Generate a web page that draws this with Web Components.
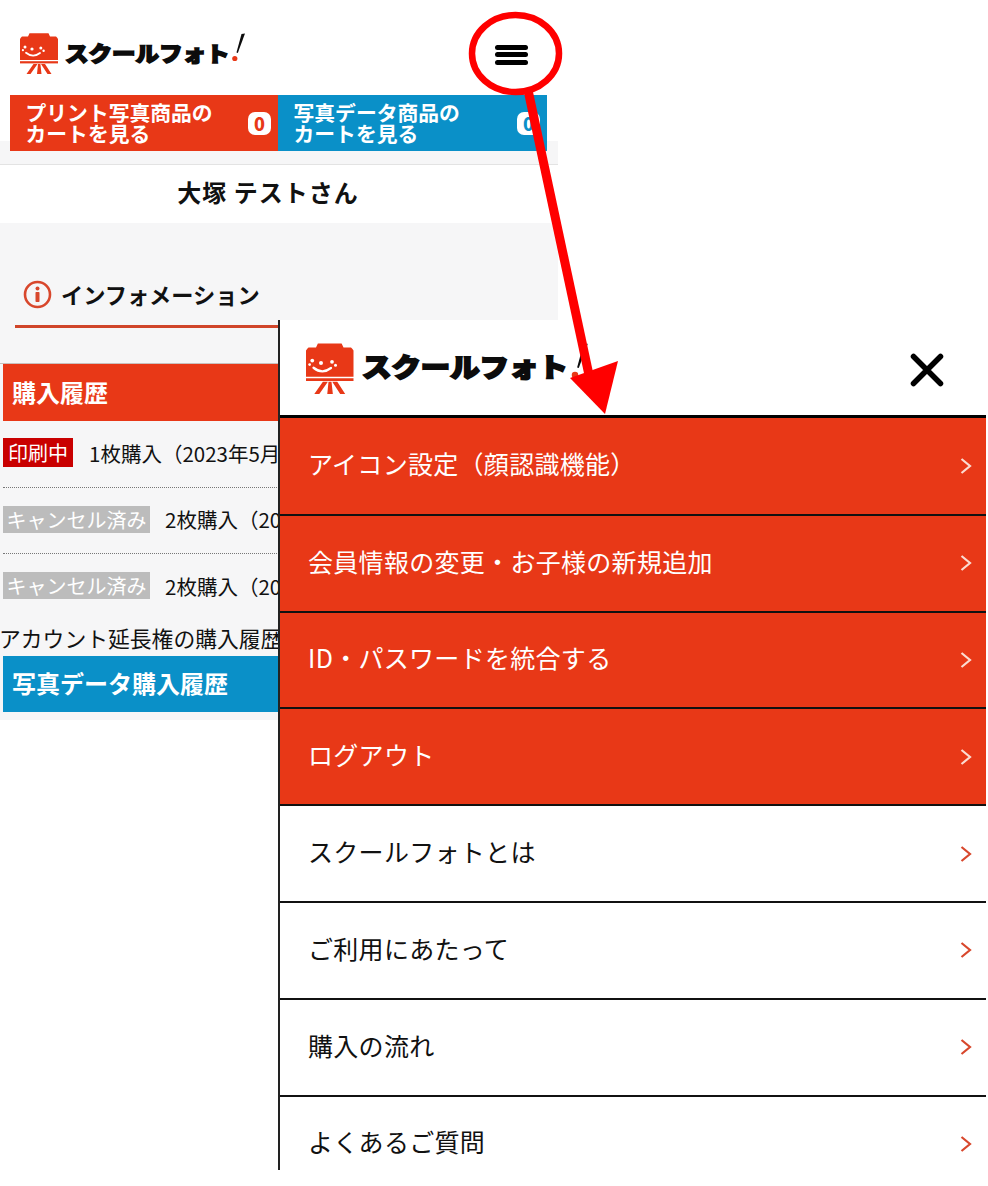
<!DOCTYPE html>
<html lang="ja"><head><meta charset="utf-8"><title>スクールフォト</title>
<style>
html,body{margin:0;padding:0;background:#fff}
body{font-family:"Noto Sans CJK JP","Noto Sans",sans-serif;color:#000}
</style></head><body>
<x-app>
  <x-screen>
    <x-top></x-top>
    <x-cart-bar>
      <x-cart color="#e83817" count="0">プリント写真商品の<br>カートを見る</x-cart>
      <x-cart color="#0a90c8" count="0">写真データ商品の<br>カートを見る</x-cart>
    </x-cart-bar>
    <x-user>大塚 テストさん</x-user>
    <x-info>インフォメーション</x-info>
    <x-bar color="#e83817" h="57">購入履歴</x-bar>
    <x-order state="printing" label="印刷中" h="67">1枚購入（2023年5月</x-order>
    <x-order state="cancel" label="キャンセル済み" h="66">2枚購入（2023年5月</x-order>
    <x-order state="cancel" label="キャンセル済み" h="66" noline="">2枚購入（2023年5月</x-order>
    <x-plain>アカウント延長権の購入履歴</x-plain>
    <x-bar color="#0a90c8" h="56">写真データ購入履歴</x-bar>
  </x-screen>
  <x-menu>
    <x-menu-item tone="red" first="">アイコン設定（顔認識機能）</x-menu-item>
    <x-menu-item tone="red">会員情報の変更・お子様の新規追加</x-menu-item>
    <x-menu-item tone="red">ID・パスワードを統合する</x-menu-item>
    <x-menu-item tone="red">ログアウト</x-menu-item>
    <x-menu-item>スクールフォトとは</x-menu-item>
    <x-menu-item>ご利用にあたって</x-menu-item>
    <x-menu-item>購入の流れ</x-menu-item>
    <x-menu-item>よくあるご質問</x-menu-item>
  </x-menu>
  <x-annotation></x-annotation>
</x-app>
<script>
function def(name, css, html, init){
  customElements.define(name, class extends HTMLElement{
    connectedCallback(){
      if(this.shadowRoot) return;
      const r=this.attachShadow({mode:'open'});
      r.innerHTML='<style>'+css+'</style>'+(typeof html==='function'?html(this):html);
      if(init) init(this,r);
    }
  });
}
const FONT='"Noto Sans CJK JP","Noto Sans",sans-serif';
const GREY='#f6f6f7';
def('x-app',`:host{display:block;position:relative;width:988px;height:1186px;overflow:hidden;background:#fff;font-family:${FONT}}`,'<slot></slot>');
def('x-screen',`:host{display:flex;flex-direction:column;width:558px;height:720px;background:${GREY}}`,'<slot></slot>');
def('x-logo',`:host{display:inline-flex;align-items:flex-start;--s:var(--scale,1)}
 svg.cam{display:block;width:calc(38px*var(--s));height:calc(41px*var(--s));flex:none}
 span{display:block;width:calc(165px*var(--s));margin-left:calc(7px*var(--s));margin-top:calc(5px*var(--s));font-size:calc(21px*var(--s));line-height:calc(28px*var(--s));font-weight:900;color:#0c0c0c;-webkit-text-stroke:calc(1.5px*var(--s)) #0c0c0c;white-space:nowrap;transform:scaleX(1.12);transform-origin:0 50%}
 svg.ex{display:block;flex:none;width:calc(16px*var(--s));height:calc(30px*var(--s))}`,
 `<svg class="cam" viewBox="0 0 38 41"><path fill="#e83817" d="M1 4.500 2 3.500H8L9.500 .3H28.500L30 3.500H36L37 4.500 38 6V27H0V6z"/><rect x="0" y="28.200" width="38" height="2.200" fill="#e83817"/>
 <g fill="#fff"><circle cx="5" cy="14" r="1.500"/><circle cx="2.900" cy="17.200" r="1.100"/><circle cx="12" cy="16" r="1.600"/><circle cx="20.800" cy="15" r="1.500"/><circle cx="23.600" cy="17.800" r="1.200"/></g>
 <path d="M6 19.800q7 5.600 14 .2" fill="none" stroke="#fff" stroke-width="1.800" stroke-linecap="round"/>
 <path fill="#e83817" d="M13.500 31h4L10.500 41H6.500zM18 31h2.400L21.500 41h-4.500zM21 31h4L31.500 41h-4z"/></svg>
 <span>スクールフォト</span>
 <svg class="ex" viewBox="0 0 16 30"><path d="M15 .5 7.800 20 6.500 19.500 11.500 1z" fill="#0c0c0c"/><circle cx="4.800" cy="25.500" r="2.600" fill="#e83817"/></svg>`);
def('x-top',`:host{display:block;height:95px;box-sizing:border-box;padding:33px 0 0 20px;background:#fff}`,`<x-logo></x-logo>`);
def('x-cart-bar',`:host{display:grid;grid-template-columns:268px 269px;padding:0 11px 14px 10px;background:linear-gradient(#fff 0 46px,${GREY} 46px 69px,#e3e3e3 69px 70px)}`,'<slot></slot>');
def('x-cart',`:host{display:flex;align-items:center;justify-content:space-between;height:56px;box-sizing:border-box;padding:0 7px 0 15.500px;background:var(--c);color:#fff;font-size:20.800px;line-height:21px;font-weight:700}
 .n{display:flex;align-items:center;justify-content:center;width:23px;height:23px;border-radius:7px;background:#fff;color:var(--c);font-size:18px;font-weight:900;line-height:1}
 .t{white-space:nowrap;margin-top:-1px}`,
 e=>`<div class="t"><slot></slot></div><div class="n">${e.getAttribute('count')}</div>`,
 e=>e.style.setProperty('--c',e.getAttribute('color')));
def('x-user',`:host{display:flex;align-items:center;justify-content:center;height:58px;box-sizing:border-box;padding:0 22px 6px 0;background:#fff;font-size:24px;font-weight:700;letter-spacing:1px;color:#111;white-space:nowrap}`,'<slot></slot>');
def('x-info',`:host{display:block;height:141px;box-sizing:border-box;padding:55px 0 0 15px;border-bottom:1px solid #c9c0bd}
 .h{display:flex;align-items:center;gap:9px;height:50px;box-sizing:border-box;padding:0 0 15px 8px;border-bottom:3px solid #d0452a;font-size:22.200px;font-weight:700;color:#111;white-space:nowrap}
 svg{flex:none}`,
 `<div class="h"><svg width="29" height="29" viewBox="0 0 29 29"><circle cx="14.500" cy="14.500" r="12.500" fill="none" stroke="#d8472c" stroke-width="2.600"/><circle cx="14.500" cy="8.500" r="2" fill="#d8472c"/><rect x="12.500" y="12" width="4" height="10" rx=".8" fill="#d8472c"/></svg><span><slot></slot></span></div>`);
def('x-bar',`:host{display:flex;align-items:center;margin-left:3px;box-sizing:border-box;padding:0 0 3px 9px;background:var(--c);color:#fff;font-size:24px;font-weight:700;white-space:nowrap}`,'<slot></slot>',
 e=>{e.style.setProperty('--c',e.getAttribute('color'));e.style.height=e.getAttribute('h')+'px';});
def('x-order',`:host{display:flex;align-items:center;gap:15px;box-sizing:border-box;padding-bottom:3px;margin-left:3px;width:276px;border-bottom:1px dotted #777;font-size:20.500px;color:#111;white-space:nowrap;overflow:hidden}
 :host([noline]){border-bottom:0}
 b{display:block;font-weight:400;font-size:20px;line-height:27px;color:#fff;flex:none}
 .printing{background:#c90000;line-height:29px;padding:0 5px;margin-right:1px}.cancel{background:#bcbcbc;padding:0 3.500px}`,
 e=>`<b class="${e.getAttribute('state')}">${e.getAttribute('label')}</b><span><slot></slot></span>`,
 e=>{e.style.height=e.getAttribute('h')+'px';});
def('x-plain',`:host{display:block;height:36px;margin-left:-1px;font-size:21.800px;line-height:36px;color:#111;white-space:nowrap}`,'<slot></slot>');
def('x-menu',`:host{position:absolute;left:278px;top:320px;width:708px;height:850px;box-sizing:border-box;border-left:2px solid #222;background:#fff;overflow:hidden}
 .head{display:flex;align-items:flex-start;justify-content:space-between;height:98px;box-sizing:border-box;padding:23px 41px 0 26px;border-bottom:3px solid #000}
 x-logo{--scale:1.250}
 svg{margin-top:9px}`,
 `<div class="head"><x-logo></x-logo><svg width="36" height="36" viewBox="0 0 36 36"><path d="M4.500 4.500 31.500 31.500M31.500 4.500 4.500 31.500" stroke="#000" stroke-width="5.500" stroke-linecap="round"/></svg></div><slot></slot>`);
def('x-menu-item',`:host{display:flex;align-items:center;justify-content:space-between;height:96.800px;box-sizing:border-box;padding:0 14px 0 28px;border-bottom:2px solid #111;background:#fff;color:#111;font-size:25px;letter-spacing:.3px;white-space:nowrap}
 :host([first]){height:97.800px}
 :host([tone=red]){background:#e83817;color:#fff}
 span{margin-bottom:5px}
 svg{stroke:#d8472c}:host([tone=red]) svg{stroke:#fbdcd2}`,
 `<span><slot></slot></span><svg width="12" height="18" viewBox="0 0 12 18"><path d="M1.500 2 10 9 1.500 16" fill="none" stroke-width="2.200"/></svg>`);
def('x-annotation',`:host{position:absolute;left:0;top:0;width:988px;height:1186px;pointer-events:none}svg{display:block}`,
 `<svg width="988" height="1186" viewBox="0 0 988 1186"><ellipse cx="515.500" cy="53.500" rx="43.500" ry="38.500" fill="none" stroke="#f00" stroke-width="6.500"/>
 <g fill="#000"><rect x="495" y="45" width="33" height="5" rx="2.500"/><rect x="495" y="52" width="33" height="5" rx="2.500"/><rect x="495" y="60" width="33" height="5" rx="2.500"/></g>
 <path d="M528 90 589 375" stroke="#f00" stroke-width="9" fill="none"/><path fill="#f00" d="M570 378 618 361 605 414z"/></svg>`);
</script>
</body></html>
